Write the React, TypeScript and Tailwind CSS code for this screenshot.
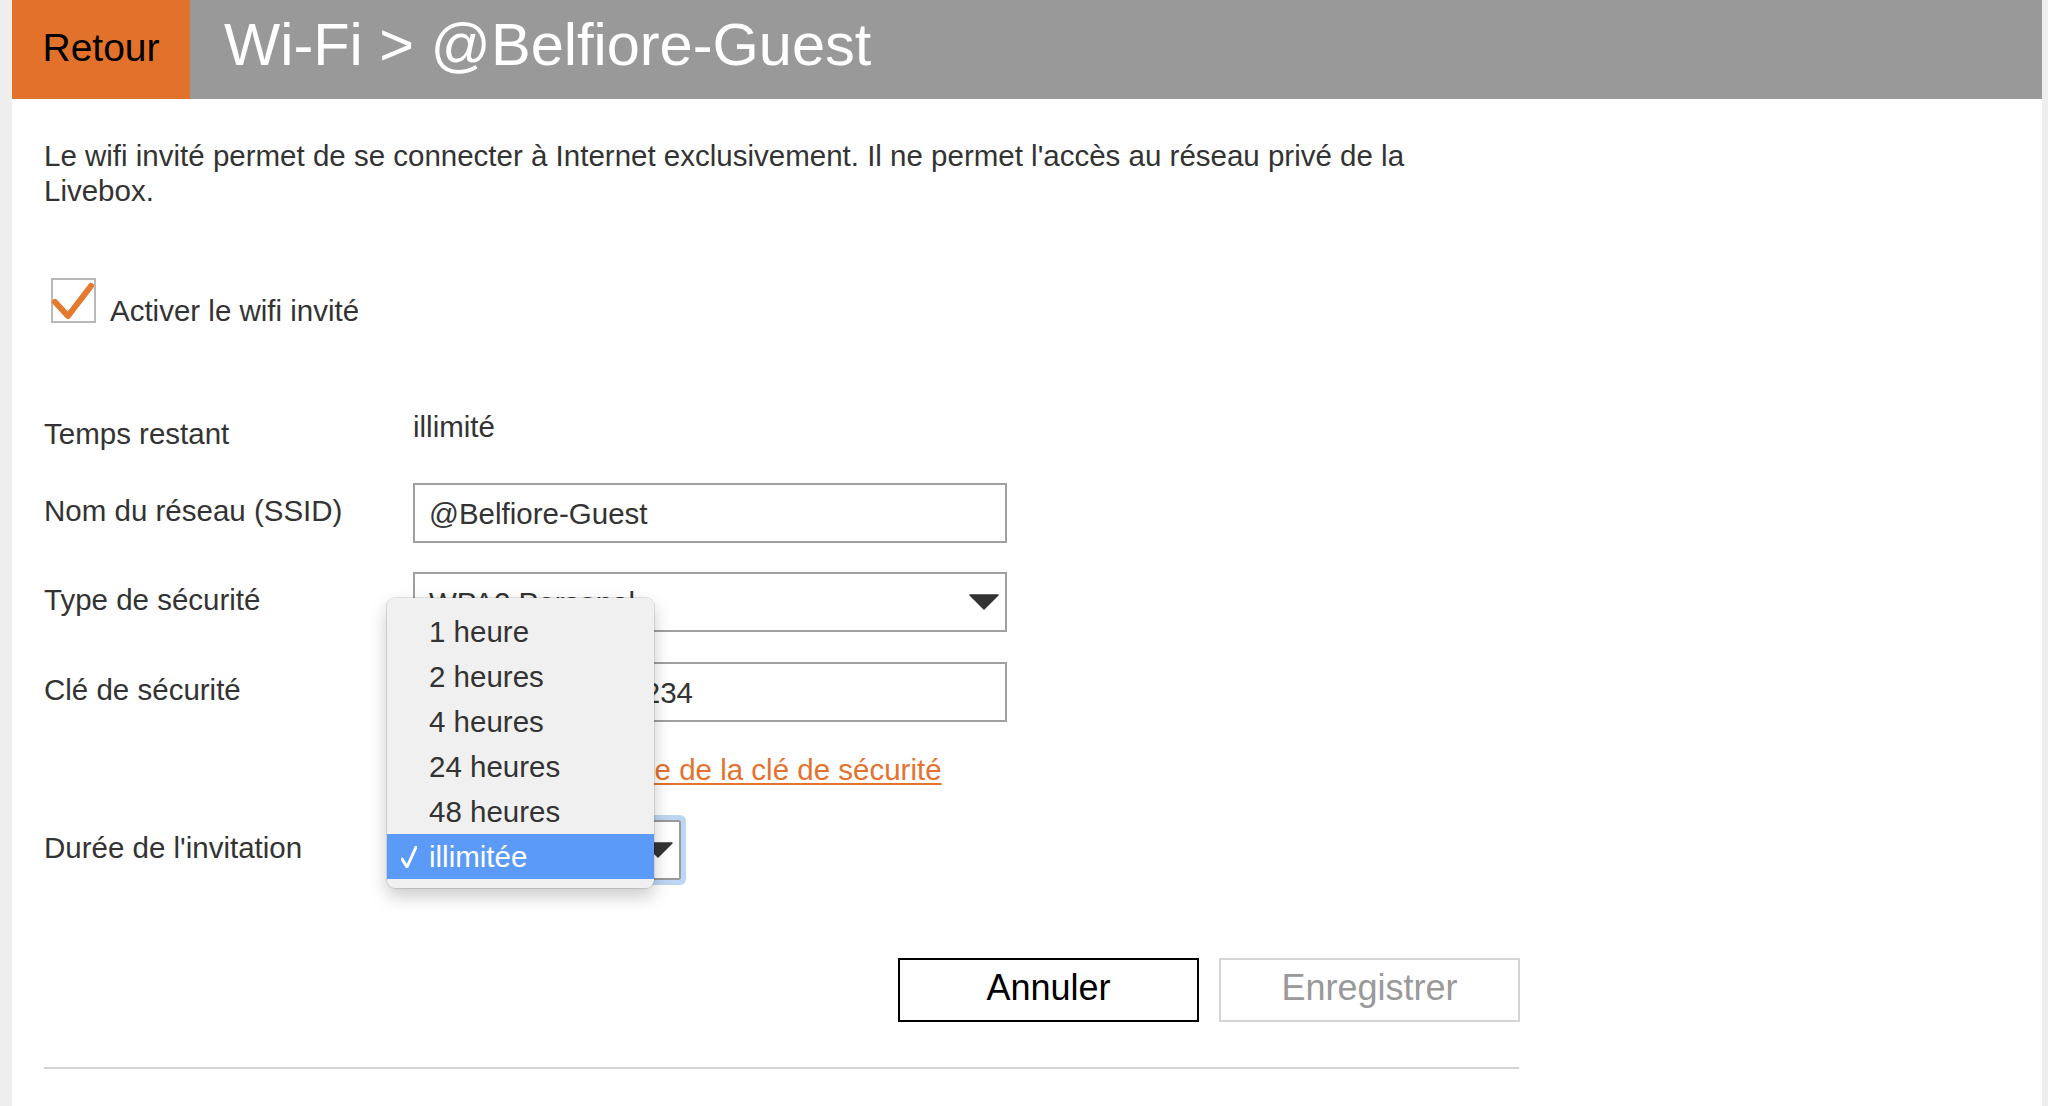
import React from 'react';

const durations = ['1 heure', '2 heures', '4 heures', '24 heures', '48 heures', 'illimitée'];

function Arrow() {
  return (
    <svg width="30" height="16" viewBox="0 0 30 16" className="shrink-0">
      <path d="M1 1H29L15 15Z" fill="#333" stroke="#333" strokeWidth="1.5" strokeLinejoin="round" />
    </svg>
  );
}

function Row({ label, children }: { label: string; children: React.ReactNode }) {
  return (
    <div className="flex items-start">
      <span className="w-[369px] shrink-0 pt-[10px]">{label}</span>
      {children}
    </div>
  );
}

export default function App() {
  return (
    <div className="relative min-h-screen bg-[#eeeeee] pl-[12px] pr-[6px] font-['Liberation_Sans',Arial,sans-serif]">
      <div className="min-h-[1106px] bg-white">
        {/* title bar */}
        <header className="flex h-[99px] bg-[#999999]">
          <button className="w-[178px] bg-[#e2722b] pb-[4px] text-[39px] leading-none text-black">Retour</button>
          <h1 className="pl-[34px] pt-[15px] text-[59.5px] leading-none text-white">Wi-Fi &gt; @Belfiore-Guest</h1>
        </header>

        <main className="ml-[32px] w-[1476px] text-[29.5px] leading-[35px] text-[#333]">
          <p className="mt-[39px] max-w-[1440px]">
            Le wifi invité permet de se connecter à Internet exclusivement. Il ne permet l'accès au réseau privé de la Livebox.
          </p>

          <label className="mt-[70px] flex items-start">
            <span className="relative ml-[7px] h-[45px] w-[45px] shrink-0 border-2 border-[#b8b8b8] bg-white">
              <svg width="45" height="45" viewBox="0 0 45 45" className="absolute -left-[2px] -top-[2px]">
                <path d="M4 24L17 38L40 8" fill="none" stroke="#e57a2e" strokeWidth="6" strokeLinecap="round" strokeLinejoin="round" />
              </svg>
            </span>
            <span className="ml-[14px] mt-[15px]">Activer le wifi invité</span>
          </label>

          {/* form */}
          <div className="mt-[81px] flex items-start">
            <span className="mt-[7px] w-[369px] shrink-0">Temps restant</span>
            <span>illimité</span>
          </div>

          <div className="mt-[32px]">
            <Row label="Nom du réseau (SSID)">
              <div className="flex h-[60px] w-[594px] items-center border-2 border-[#a0a0a0] pl-[14px]">@Belfiore-Guest</div>
            </Row>
          </div>

          <div className="mt-[29px]">
            <Row label="Type de sécurité">
              <div className="flex h-[60px] w-[594px] items-center justify-between border-2 border-[#a0a0a0] pl-[14px] pr-[6px]">
                <span>WPA2 Personal</span>
                <Arrow />
              </div>
            </Row>
          </div>

          <div className="mt-[30px]">
            <Row label="Clé de sécurité">
              <div className="flex h-[60px] w-[594px] items-center border-2 border-[#a0a0a0] pl-[14px]">Belfiore-Guest-1234</div>
            </Row>
          </div>

          <div className="mt-[30px] flex">
            <span className="w-[363px] shrink-0" />
            <a href="#" className="text-[#e5722e] underline underline-offset-[3px]">
              Tester la robustesse de la clé de sécurité
            </a>
          </div>

          <div className="mt-[33px]">
            <Row label="Durée de l'invitation">
              <div className="flex h-[60px] w-[268px] items-center justify-between rounded-[2px] border-2 border-[#9a9a9a] pl-[14px] pr-[6px] shadow-[0_0_0_5px_#bcd6f3]">
                <span>illimitée</span>
                <Arrow />
              </div>
            </Row>
          </div>

          <div className="mt-[78px] flex justify-end gap-[20px] text-[36px] leading-none">
            <button className="h-[64px] w-[301px] border-2 border-black pb-[5px] text-black">Annuler</button>
            <button className="h-[64px] w-[301px] border-2 border-[#d4d4d4] pb-[5px] text-[#999]">Enregistrer</button>
          </div>

          <div className="mt-[45px] h-[2px] w-[1475px] bg-[#d3d3d3]" />
        </main>
      </div>

      {/* open list of the duration select */}
      <div className="absolute left-[387px] top-[598px] w-[267px] rounded-[8px] bg-[#f0f0f0] pb-[9px] pt-[11px] text-[29.5px] text-[#333] shadow-[0_8px_18px_rgba(0,0,0,0.22)] ring-1 ring-black/10">
        {durations.map((d) => {
          const selected = d === 'illimitée';
          return (
            <div
              key={d}
              className={`flex h-[45px] items-center leading-[45px] ${selected ? 'bg-[#5b9bf7] text-white' : ''}`}
            >
              <span className="flex w-[42px] justify-center pl-[2px]">
                {selected && (
                  <svg width="16" height="22" viewBox="0 0 16 22">
                    <path d="M1 13L6 21L15 1" fill="none" stroke="white" strokeWidth="3" strokeLinecap="round" strokeLinejoin="round" />
                  </svg>
                )}
              </span>
              <span>{d}</span>
            </div>
          );
        })}
      </div>
    </div>
  );
}
